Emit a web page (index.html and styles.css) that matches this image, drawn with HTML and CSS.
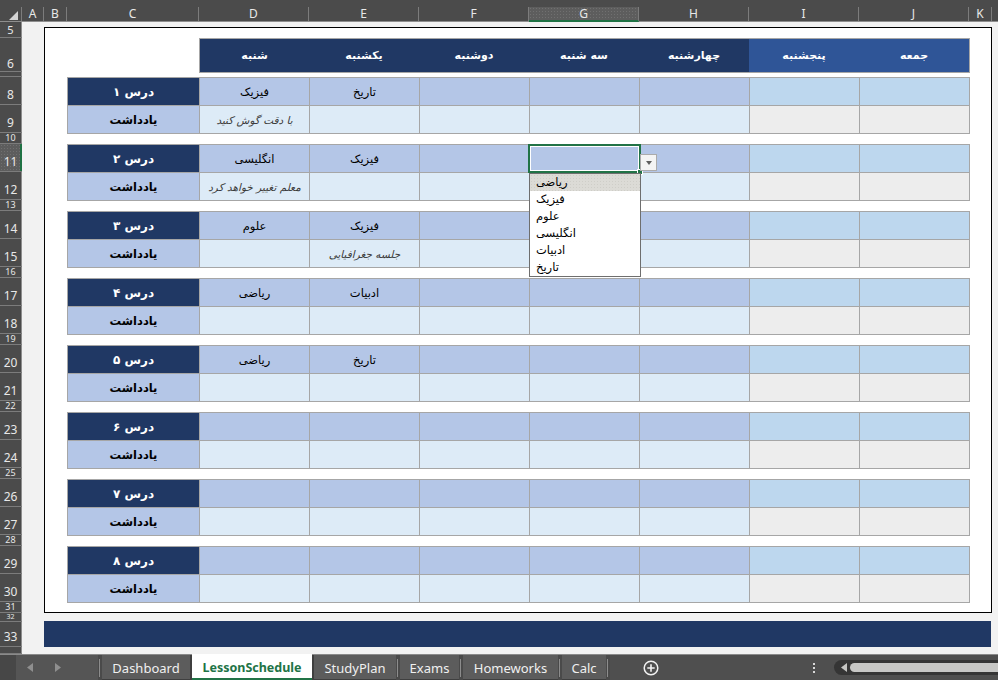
FILE: index.html
```html
<!DOCTYPE html>
<html lang="fa">
<head>
<meta charset="utf-8">
<title>LessonSchedule</title>
<link rel="stylesheet" href="styles.css">
</head>
<body>
<div class="colhead">
  <div class="ch corner"><span class="tri"></span></div>
  <div class="ch w22">A</div>
  <div class="ch w23">B</div>
  <div class="ch w132">C</div>
  <div class="ch w110">D</div>
  <div class="ch w110">E</div>
  <div class="ch w110">F</div>
  <div class="ch w110 chsel">G</div>
  <div class="ch w110">H</div>
  <div class="ch w110">I</div>
  <div class="ch w110">J</div>
  <div class="ch w23">K</div>
  <div class="ch rest"></div>
</div>
<div class="main">
  <div class="rowhead">
    <div class="rh h16 p5">5</div>
    <div class="rh h34 p0">6</div>
    <div class="rh h5"></div>
    <div class="rh h28">8</div><div class="rh h28">9</div><div class="rh h11">10</div>
    <div class="rh h28 rhsel">11</div><div class="rh h28">12</div><div class="rh h11">13</div>
    <div class="rh h28">14</div><div class="rh h28">15</div><div class="rh h11">16</div>
    <div class="rh h28">17</div><div class="rh h28">18</div><div class="rh h11">19</div>
    <div class="rh h28">20</div><div class="rh h28">21</div><div class="rh h11">22</div>
    <div class="rh h28">23</div><div class="rh h28">24</div><div class="rh h11">25</div>
    <div class="rh h28">26</div><div class="rh h28">27</div><div class="rh h11">28</div>
    <div class="rh h28">29</div><div class="rh h28">30</div><div class="rh h11">31</div>
    <div class="rh h9">32</div>
    <div class="rh h25">33</div>
    <div class="rh hrest"></div>
  </div>
  <div class="sheet">
    <div class="box">
      <div class="dayhead">
        <div class="day">شنبه</div>
        <div class="day">یکشنبه</div>
        <div class="day">دوشنبه</div>
        <div class="day">سه شنبه</div>
        <div class="day">چهارشنبه</div>
        <div class="day alt">پنجشنبه</div>
        <div class="day alt">جمعه</div>
      </div>
      <div class="blocks">
        <div class="block">
          <div class="c lesson">درس ۱</div>
          <div class="c subj">فیزیک</div><div class="c subj">تاریخ</div><div class="c subj"></div><div class="c subj"></div><div class="c subj"></div><div class="c subj2"></div><div class="c subj2"></div>
          <div class="c notelbl">یادداشت</div>
          <div class="c note">با دقت گوش کنید</div><div class="c note"></div><div class="c note"></div><div class="c note"></div><div class="c note"></div><div class="c note2"></div><div class="c note2"></div>
        </div>
        <div class="block">
          <div class="c lesson">درس ۲</div>
          <div class="c subj">انگلیسی</div><div class="c subj">فیزیک</div><div class="c subj"></div>
          <div class="c subj sel">
            <div class="selframe"><span class="handle"></span></div>
            <div class="ddbtn"><span class="ddtri"></span></div>
            <div class="ddlist">
              <div class="dditem hi">ریاضی</div>
              <div class="dditem">فیزیک</div>
              <div class="dditem">علوم</div>
              <div class="dditem">انگلیسی</div>
              <div class="dditem">ادبیات</div>
              <div class="dditem">تاریخ</div>
            </div>
          </div>
          <div class="c subj"></div><div class="c subj2"></div><div class="c subj2"></div>
          <div class="c notelbl">یادداشت</div>
          <div class="c note">معلم تغییر خواهد کرد</div><div class="c note"></div><div class="c note"></div><div class="c note"></div><div class="c note"></div><div class="c note2"></div><div class="c note2"></div>
        </div>
        <div class="block">
          <div class="c lesson">درس ۳</div>
          <div class="c subj">علوم</div><div class="c subj">فیزیک</div><div class="c subj"></div><div class="c subj"></div><div class="c subj"></div><div class="c subj2"></div><div class="c subj2"></div>
          <div class="c notelbl">یادداشت</div>
          <div class="c note"></div><div class="c note">جلسه جغرافیایی</div><div class="c note"></div><div class="c note"></div><div class="c note"></div><div class="c note2"></div><div class="c note2"></div>
        </div>
        <div class="block">
          <div class="c lesson">درس ۴</div>
          <div class="c subj">ریاضی</div><div class="c subj">ادبیات</div><div class="c subj"></div><div class="c subj"></div><div class="c subj"></div><div class="c subj2"></div><div class="c subj2"></div>
          <div class="c notelbl">یادداشت</div>
          <div class="c note"></div><div class="c note"></div><div class="c note"></div><div class="c note"></div><div class="c note"></div><div class="c note2"></div><div class="c note2"></div>
        </div>
        <div class="block">
          <div class="c lesson">درس ۵</div>
          <div class="c subj">ریاضی</div><div class="c subj">تاریخ</div><div class="c subj"></div><div class="c subj"></div><div class="c subj"></div><div class="c subj2"></div><div class="c subj2"></div>
          <div class="c notelbl">یادداشت</div>
          <div class="c note"></div><div class="c note"></div><div class="c note"></div><div class="c note"></div><div class="c note"></div><div class="c note2"></div><div class="c note2"></div>
        </div>
        <div class="block">
          <div class="c lesson">درس ۶</div>
          <div class="c subj"></div><div class="c subj"></div><div class="c subj"></div><div class="c subj"></div><div class="c subj"></div><div class="c subj2"></div><div class="c subj2"></div>
          <div class="c notelbl">یادداشت</div>
          <div class="c note"></div><div class="c note"></div><div class="c note"></div><div class="c note"></div><div class="c note"></div><div class="c note2"></div><div class="c note2"></div>
        </div>
        <div class="block">
          <div class="c lesson">درس ۷</div>
          <div class="c subj"></div><div class="c subj"></div><div class="c subj"></div><div class="c subj"></div><div class="c subj"></div><div class="c subj2"></div><div class="c subj2"></div>
          <div class="c notelbl">یادداشت</div>
          <div class="c note"></div><div class="c note"></div><div class="c note"></div><div class="c note"></div><div class="c note"></div><div class="c note2"></div><div class="c note2"></div>
        </div>
        <div class="block">
          <div class="c lesson">درس ۸</div>
          <div class="c subj"></div><div class="c subj"></div><div class="c subj"></div><div class="c subj"></div><div class="c subj"></div><div class="c subj2"></div><div class="c subj2"></div>
          <div class="c notelbl">یادداشت</div>
          <div class="c note"></div><div class="c note"></div><div class="c note"></div><div class="c note"></div><div class="c note"></div><div class="c note2"></div><div class="c note2"></div>
        </div>
      </div>
    </div>
    <div class="navybar"></div>
  </div>
</div>
<div class="tabbar">
  <div class="nav">
    <svg class="arrow" width="6" height="9" viewBox="0 0 6 9"><polygon points="6,0 6,9 0,4.5" fill="#8f8f8f"/></svg>
    <svg class="arrow" width="6" height="9" viewBox="0 0 6 9"><polygon points="0,0 0,9 6,4.5" fill="#8f8f8f"/></svg>
  </div>
  <div class="sep"></div>
  <div class="tab t-dash">Dashboard</div>
  <div class="gap"></div>
  <div class="tab active t-lesson">LessonSchedule</div>
  <div class="gap"></div>
  <div class="tab t-study">StudyPlan</div>
  <div class="sep"></div>
  <div class="tab t-exams">Exams</div>
  <div class="sep"></div>
  <div class="tab t-home">Homeworks</div>
  <div class="sep"></div>
  <div class="tab t-calc">Calc</div>
  <div class="sep"></div>
  <div class="addtab">
    <svg width="16" height="16" viewBox="0 0 16 16"><circle cx="8" cy="8" r="6.8" fill="none" stroke="#f2f2f2" stroke-width="1.5"/><path d="M8 4.3v7.4M4.3 8h7.4" stroke="#f2f2f2" stroke-width="1.6"/></svg>
  </div>
  <div class="spacer"></div>
  <div class="vdots">
    <span class="dot"></span><span class="dot"></span><span class="dot"></span>
  </div>
  <div class="hscroll">
    <svg class="sarrow" width="6" height="9" viewBox="0 0 6 9"><polygon points="6,0 6,9 0,4.5" fill="#c4c4c2"/></svg>
    <div class="track"></div>
  </div>
</div>
</body>
</html>
```
FILE: styles.css
```css
* { box-sizing: border-box; margin: 0; padding: 0; }
html, body { width: 998px; height: 680px; overflow: hidden; }
body {
  background: #f2f2f2;
  font-family: "DejaVu Sans", "Noto Sans", sans-serif;
}

/* column header */
.colhead {
  height: 22px;
  display: flex;
  background: #4b4b4b;
  box-shadow: inset 0 -1px 0 #8e8e8e;
}
.ch {
  height: 14px;
  margin-top: 7px;
  border-right: 1px solid #7c7c7c;
  color: #e8e8e8;
  font: 12px/14px "Noto Sans", "DejaVu Sans", sans-serif;
  display: flex;
  align-items: center;
  justify-content: center;
  flex: none;
}
.corner { width: 22px; position: relative; }
.tri {
  position: absolute;
  right: 3px;
  bottom: 1px;
  width: 0; height: 0;
  border-left: 9px solid transparent;
  border-bottom: 9px solid #d4d4d4;
}
.w22 { width: 22px; }
.w23 { width: 23px; }
.w132 { width: 132px; }
.w110 { width: 110px; }
.rest { flex: 1; border-right: none; }
.chsel {
  height: 15px;
  background-color: #5d5d5d;
  background-image: radial-gradient(#707070 0.7px, transparent 0.8px);
  background-size: 3px 3px;
  border-bottom: 2px solid #1f7244;
}

/* main */
.main {
  display: flex;
  height: 632px;
  overflow: hidden;
}
.rowhead {
  width: 22px;
  flex: none;
  background: #4b4b4b;
  box-shadow: inset -1px 0 0 #8e8e8e;
  display: flex;
  flex-direction: column;
}
.rh {
  flex: none;
  border-bottom: 1px solid #7c7c7c;
  color: #e8e8e8;
  font: 12px/14px "Noto Sans", "DejaVu Sans", sans-serif;
  display: flex;
  align-items: flex-end;
  justify-content: center;
  overflow: hidden;
  padding-bottom: 2px;
  padding-right: 1px;
}
.h16 { height: 16px; }
.h34 { height: 34px; }
.h5 { height: 5px; padding-bottom: 0; }
.h28 { height: 28px; }
.h11 { height: 11px; padding-bottom: 0; font-size: 9px; line-height: 10px; align-items: flex-start; }
.h9 { height: 9px; padding-bottom: 0; font-size: 7px; line-height: 8px; align-items: flex-start; }
.h25 { height: 25px; }
.hrest { flex: 1; padding-bottom: 0; }
.p5 { padding-bottom: 1px; font-size: 11px; line-height: 13px; }
.p0 { padding-bottom: 0; }
.rhsel {
  background-color: #5d5d5d;
  background-image: radial-gradient(#707070 0.7px, transparent 0.8px);
  background-size: 3px 3px;
  box-shadow: inset -2px 0 0 #1f7244;
}

.sheet {
  flex: 1;
  padding-left: 22px;
  padding-top: 5px;
}
.box {
  width: 948px;
  border: 1px solid #000;
  background: #fff;
  padding: 10px 21px 9px 22px;
}
.dayhead {
  margin-left: 132px;
  width: 771px;
  height: 35px;
  border: 1px solid #a6a6a6;
  display: grid;
  grid-template-columns: 109px repeat(6, 110px);
  margin-bottom: 4px;
}
.day {
  background: #203864;
  color: #fff;
  font-weight: bold;
  font-size: 11px;
  display: flex;
  align-items: center;
  justify-content: center;
}
.day.alt { background: #2f5597; }

.blocks {
  display: flex;
  flex-direction: column;
  gap: 10px;
}
.block {
  width: 903px;
  display: grid;
  grid-template-columns: 131px repeat(7, 109px);
  grid-template-rows: 27px 27px;
  gap: 1px;
  padding: 1px;
  background: #a6a6a6;
}
.c {
  display: flex;
  align-items: center;
  justify-content: center;
  font-size: 11.5px;
  color: #000;
  white-space: nowrap;
}
.lesson { background: #203864; color: #fff; font-weight: bold; font-size: 12px; }
.notelbl { background: #b4c6e7; font-weight: bold; font-size: 11.5px; }
.subj { background: #b4c6e7; }
.subj2 { background: #bdd7ee; }
.note { background: #ddebf7; font-style: italic; color: #3b3b3b; font-size: 10.5px; }
.note2 { background: #ededed; }

/* selection + dropdown */
.sel { position: relative; z-index: 5; }
.selframe {
  position: absolute;
  top: -1px; left: -2px; right: -2px; bottom: -1px;
  border: 2px solid #217346;
  box-shadow: inset 0 0 0 1px #fff;
}
.handle {
  position: absolute;
  right: -4px; bottom: -4px;
  width: 6px; height: 6px;
  background: #217346;
  border: 1px solid #fff;
}
.ddbtn {
  position: absolute;
  left: 110px; top: 9px;
  width: 17px; height: 17px;
  background: #f4f4f4;
  border: 1px solid #ababab;
  display: flex;
  align-items: center;
  justify-content: center;
}
.ddtri {
  width: 0; height: 0;
  border-left: 3.5px solid transparent;
  border-right: 3.5px solid transparent;
  border-top: 4px solid #5e5e5e;
}
.ddlist {
  position: absolute;
  left: -1px; top: 28px;
  width: 112px; height: 104px;
  background: #fff;
  border: 1px solid #6e6e6e;
}
.dditem {
  height: 17px;
  font-size: 11.5px;
  line-height: 17px;
  padding-left: 6px;
  text-align: left;
  color: #000;
}
.dditem.hi {
  background-color: #dcdbd6;
  background-image: radial-gradient(#cfcec8 0.7px, transparent 0.8px);
  background-size: 3px 3px;
}

.navybar {
  margin-top: 8px;
  width: 947px;
  height: 26px;
  background: #203864;
}

/* tab bar */
.tabbar {
  height: 26px;
  background: #4f4f4f;
  border-top: 1px solid #8a8a8a;
  display: flex;
  align-items: stretch;
  font-family: "Noto Sans", "Open Sans", sans-serif;
  font-size: 13px;
}
.nav {
  width: 98px;
  flex: none;
  display: flex;
  align-items: center;
  padding-left: 27px;
  gap: 22px;
  background: linear-gradient(to right, #474747 0 16px, #555 16px);
}
.sep {
  width: 4px;
  flex: none;
  position: relative;
  background: #4a4a4a;
}
.sep::after {
  content: "";
  position: absolute;
  left: 1px; top: 4px; bottom: 3px;
  width: 1px;
  background: #8c8c8c;
}
.gap { width: 2px; flex: none; background: #3f3f3f; }
.tab {
  flex: none;
  background: #5c5c5c;
  color: #f0f0f0;
  display: flex;
  align-items: center;
  justify-content: center;
  box-shadow: inset 0 -1px 0 #3f3f3f;
}
.tab.active {
  background: #fff;
  color: #217346;
  font-weight: bold;
  box-shadow: inset 0 -2px 0 #217346;
  margin-top: -1px;
  font-size: 12.5px;
}
.t-dash { width: 88px; }
.t-lesson { width: 120px; }
.t-study { width: 82px; }
.t-exams { width: 59px; }
.t-home { width: 95px; }
.t-calc { width: 44px; }
.addtab {
  width: 80px;
  flex: none;
  display: flex;
  align-items: center;
  justify-content: center;
  padding-left: 2px;
}
.spacer { flex: 1; }
.vdots {
  width: 12px;
  display: flex;
  flex-direction: column;
  align-items: center;
  justify-content: center;
  gap: 2px;
  margin-right: 14px;
}
.dot { width: 2px; height: 2px; background: #d8d8d8; }
.hscroll {
  width: 164px;
  flex: none;
  align-self: center;
  height: 15px;
  background: #353535;
  border-radius: 8px 0 0 8px;
  display: flex;
  align-items: center;
  padding-left: 7px;
  gap: 3px;
}
.track {
  flex: 1;
  height: 9px;
  background: #c7c7c5;
  border-radius: 5px 0 0 5px;
}
```
